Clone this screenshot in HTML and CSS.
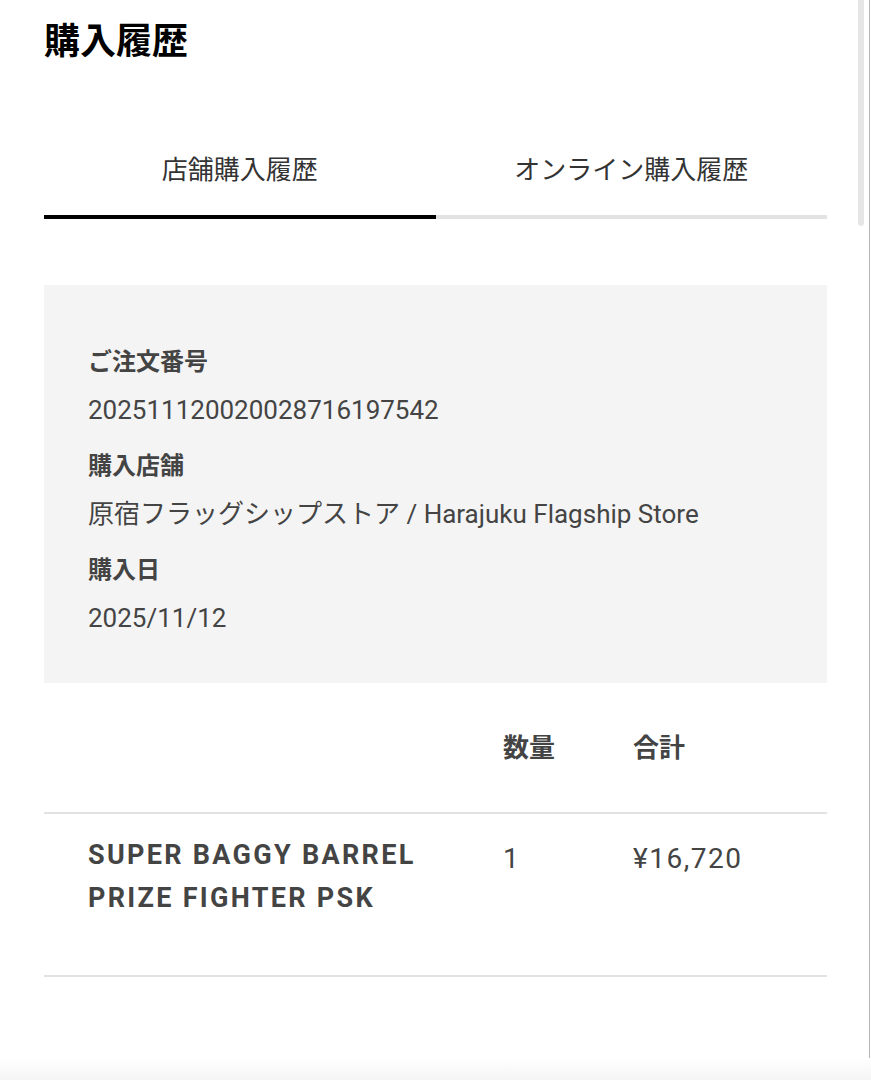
FILE: index.html
```html
<!DOCTYPE html>
<html lang="ja">
<head>
    <meta charset="UTF-8">
    <meta name="viewport" content="width=device-width, initial-scale=1.0">
    <link rel="stylesheet" href="styles.css">
    <title>購入履歴</title>
</head>
<body>
    <div class="page">
        <h1 class="page-title">購入履歴</h1>

        <!-- タブ -->
        <ul class="tabs">
            <li class="tab active">店舗購入履歴</li>
            <li class="tab">オンライン購入履歴</li>
        </ul>

        <!-- 注文情報 -->
        <dl class="order-info">
            <dt>ご注文番号</dt>
            <dd>202511120020028716197542</dd>
            <dt>購入店舗</dt>
            <dd>原宿フラッグシップストア / Harajuku Flagship Store</dd>
            <dt>購入日</dt>
            <dd>2025/11/12</dd>
        </dl>

        <!-- 商品一覧 -->
        <div class="items">
            <div class="items-row items-head">
                <div class="col-name"></div>
                <div class="col-qty">数量</div>
                <div class="col-total">合計</div>
            </div>
            <div class="items-row">
                <div class="col-name item-name">SUPER BAGGY BARREL<br>PRIZE FIGHTER PSK</div>
                <div class="col-qty item-num">1</div>
                <div class="col-total item-num price">¥16,720</div>
            </div>
        </div>
    </div>

    <div class="scroll-thumb"></div>
    <div class="edge-line"></div>
    <div class="bottom-fade"></div>
</body>
</html>
```

FILE: styles.css
```css
body {
    margin: 0;
    padding: 0;
    background: #fff;
    color: #444;
    font-family: Roboto, "Noto Sans CJK JP", sans-serif;
}

.page {
    padding: 0 44px;
}

.page-title {
    margin: 0;
    padding-top: 18px;
    font-size: 36px;
    line-height: 40px;
    font-weight: bold;
    color: #000;
    font-family: "Noto Sans CJK JP", sans-serif;
}

.tabs {
    list-style: none;
    margin: 92px 0 0;
    padding: 0;
    display: flex;
}
.tab {
    flex: 1;
    text-align: center;
    font-size: 26px;
    line-height: 36px;
    padding-bottom: 29px;
    color: #333;
    border-bottom: 4px solid #e3e3e3;
    font-family: "Noto Sans CJK JP", sans-serif;
}
.tab.active {
    border-bottom-color: #000;
}

.order-info {
    margin: 66px 0 0;
    padding: 58px 44px 45px;
    background: #f4f4f4;
}
.order-info dt {
    font-size: 24px;
    line-height: 34px;
    font-weight: bold;
    color: #444;
    font-family: "Noto Sans CJK JP", sans-serif;
}
.order-info dd {
    margin: 13px 0 17px;
    font-size: 26px;
    line-height: 40px;
    color: #444;
}
.order-info dd:last-child {
    margin-bottom: 0;
}

.items-row {
    display: grid;
    grid-template-columns: 459px 130px 1fr;
    border-bottom: 2px solid #e2e2e2;
    padding: 20px 0 55px;
    font-size: 26px;
    line-height: 43px;
}
.items-head {
    padding: 44px 0 47px;
    line-height: 38px;
    font-weight: bold;
    font-family: "Noto Sans CJK JP", sans-serif;
}
.col-name {
    padding-left: 44px;
}
.item-name {
    font-size: 27px;
    font-weight: bold;
    letter-spacing: 2.3px;
}
.item-num {
    padding-top: 3px;
    font-size: 28px;
}
.price {
    letter-spacing: 1.5px;
}

.scroll-thumb {
    position: fixed;
    top: 0;
    right: 7px;
    width: 6px;
    height: 226px;
    background: #e6e6e6;
    border-radius: 0 0 3px 3px;
}
.edge-line {
    position: fixed;
    top: 0;
    right: 1px;
    width: 1px;
    height: 100%;
    background: #b5b5b5;
}
.bottom-fade {
    position: fixed;
    left: 0;
    right: 0;
    bottom: 0;
    height: 22px;
    background: linear-gradient(#fff, #f5f5f5);
}
```
